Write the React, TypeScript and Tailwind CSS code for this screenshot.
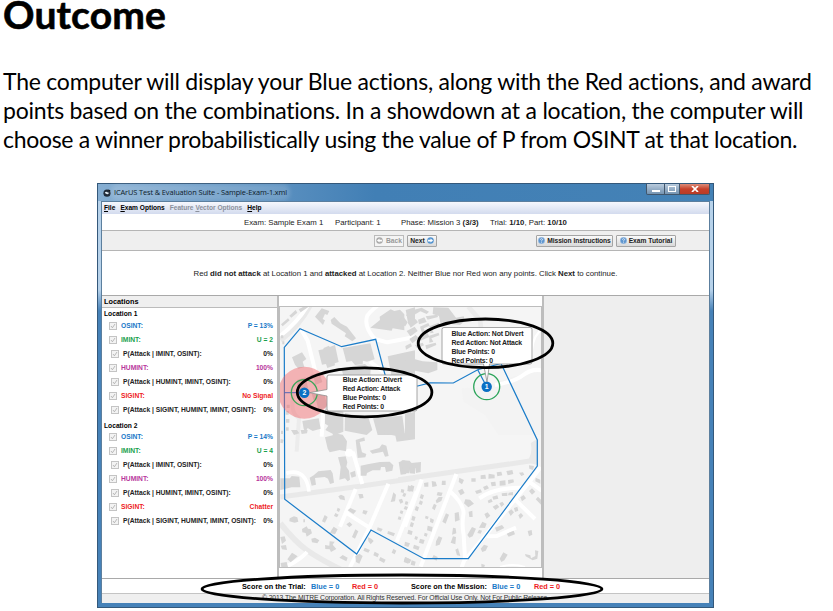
import React from "react";

type Row = { label: string; value: string; color: string; sub?: boolean };

const rowsFor = (p: string, u: string, sig: string): Row[] => [
  { label: "OSINT:", value: p, color: "text-[#1878c8]" },
  { label: "IMINT:", value: u, color: "text-[#18a04c]" },
  { label: "P(Attack | IMINT, OSINT):", value: "0%", color: "text-[#222]", sub: true },
  { label: "HUMINT:", value: "100%", color: "text-[#b8369c]" },
  { label: "P(Attack | HUMINT, IMINT, OSINT):", value: "0%", color: "text-[#222]", sub: true },
  { label: "SIGINT:", value: sig, color: "text-[#ee1c24]" },
  { label: "P(Attack | SIGINT, HUMINT, IMINT, OSINT):", value: "0%", color: "text-[#222]", sub: true },
];

function Check() {
  return (
    <svg className="h-2 w-2 shrink-0" viewBox="0 0 8 8">
      <rect x="0.5" y="0.5" width="7" height="7" fill="#f3f3f3" stroke="#c4c4c4" />
      <path d="M2 4 L3.4 5.8 L6 2" fill="none" stroke="#aaa" strokeWidth="0.8" />
    </svg>
  );
}

function SignalRow({ row }: { row: Row }) {
  return (
    <div className={`flex h-[14px] items-center pr-[4px] ${row.sub ? "pl-[9px]" : "pl-[7px]"} ${row.color}`}>
      <Check />
      <span className="ml-1 flex-1 pt-px">{row.label}</span>
      <span className="pt-px">{row.value}</span>
    </div>
  );
}

function HelpIcon() {
  return (
    <svg className="h-[7px] w-[7px] shrink-0" viewBox="0 0 8 8">
      <circle cx="4" cy="4" r="3.7" fill="#5f96cf" stroke="#a9c6e4" strokeWidth="0.6" />
      <path d="M2.8 3.1 Q2.9 1.9 4 1.9 Q5.3 2 5.2 3.1 Q5 3.8 4 4.3 V5 M4 5.7 V6.5" fill="none" stroke="#fff" strokeWidth="0.8" />
    </svg>
  );
}

function ArrowIcon({ back }: { back?: boolean }) {
  return (
    <svg className="h-[7px] w-[7px] shrink-0" viewBox="0 0 8 8">
      <circle cx="4" cy="4" r="3.7" fill={back ? "#aaa" : "#5494d0"} />
      <path d={back ? "M6.8 3 H4 V1.7 L1 4 L4 6.3 V5 H6.8 Z" : "M1.2 3 H4 V1.7 L7 4 L4 6.3 V5 H1.2 Z"} fill="#fff" />
    </svg>
  );
}

const btn =
  "flex h-[12px] items-center justify-center rounded-[1px] border border-[#a4a4a4] bg-gradient-to-b from-[#fafafa] to-[#d9d9d9] text-[6.7px] font-bold text-[#222]";

const buildings = {
  topLeft: [
    "M120 65 L140 40 L163 48 L157 60 L150 57 L143 72 L150 76 L144 90 Z",
    "M167 75 L178 66 L196 85 L216 95 L243 130 L232 139 L209 124 L213 115 L170 86 Z",
    "M286 98 L315 75 L314 65 L347 43 L358 48 L375 44 L388 58 L388 106 L353 100 L350 107 Z",
    "M392 45 L420 37 V86 L400 88 Z",
    "M130 166 L145 163 L146 159 L162 152 L164 156 L180 150 L191 201 L179 205 L180 211 L157 219 L153 207 L141 209 Z",
    "M203 159 L286 145 L299 193 L276 200 L264 197 L263 208 L240 210 L230 198 L214 201 Z",
    "M338 184 L420 166 V246 H350 Z",
    "M51 187 L81 172 L94 192 L83 200 L88 216 L70 221 L60 209 Z",
    "M200 220 L270 207 L287 221 L286 239 L204 240 Z",
    "M66 255 L92 247 L99 278 L82 286 L80 303 L68 299 Z",
    "M106 240 L133 233 L142 261 L121 270 L117 251 L108 251 Z",
    "M110 295 L145 284 L158 337 L130 345 L123 314 L115 314 Z",
    "M82 378 L131 370 L137 401 L113 408 L98 399 L91 412 L86 401 Z",
    "M150 340 L205 350 L205 410 L180 420 L151 405 L160 392 L150 386 Z",
    "M210 354 L281 370 L292 405 L275 420 L209 407 Z",
    "M294 370 L382 362 L390 420 H308 Z",
    "M394 357 L420 350 V420 H398 Z",
    "M18 88 L39 70 L44 76 L23 94 Z M43 62 L62 45 L67 53 L49 68 Z M71 43 L84 36 H100 L77 52 Z",
    "M35 329 h9 v10 h-9z M32 348 h9 v11 h-9z M33 372 h10 v11 h-10z M33 397 h8 v10 h-8z M18 121 h7 v9 h-7z M22 139 h6 v9 h-6z",
  ],
  topRight: [
    "M0 198 L13 188 L53 199 L97 202 V225 L70 235 L0 222 Z",
    "M-17 75 L-6 64 L8 82 L1 94 L-17 86 Z",
    "M85 37 L130 38 L153 68 L176 64 L180 78 L165 90 L106 83 L102 63 L83 57 Z",
    "M3 60 L22 48 L31 59 L12 72 Z M25 45 L50 38 L72 50 L65 57 L46 49 L31 58 Z M62 64 L97 59 L99 66 L68 74 Z M39 74 L58 67 L65 81 L42 88 Z M11 86 L32 72 L39 82 L17 98 Z M5 108 L29 95 L38 108 L16 124 Z M45 95 L70 84 L74 92 L56 100 L62 113 L52 117 Z M73 94 L101 83 L104 91 L81 101 L86 113 L76 115 Z M13 132 L32 120 L42 130 L22 145 Z M40 125 L68 114 L73 126 L46 137 Z M73 122 L101 113 L103 121 L79 130 L85 140 L73 143 Z M1 153 L17 145 L21 154 L3 164 Z M30 150 L53 143 L57 151 L36 160 Z M61 151 L92 143 L94 150 L64 163 Z",
    "M0 357 L18 347 V420 H0 Z",
  ],
  bottomLeft: [
    "M150 22 L173 16 L174 9 L203 14 L216 34 L213 64 L194 60 L164 67 L158 56 Z",
    "M242 30 L268 22 L270 32 L254 36 L261 67 L274 72 L271 82 L248 84 Z",
    "M284 62 L313 54 L321 43 L334 47 L341 78 L330 80 L324 65 L292 71 Z",
    "M327 0 H378 L384 11 L420 0 V28 L365 35 L361 17 L330 11 Z",
    "M189 82 L212 79 L217 97 L214 110 L222 122 L225 149 L218 154 L210 145 L193 149 L197 111 Z",
    "M225 128 L240 122 L243 139 L230 143 Z",
    "M257 107 L278 103 L315 96 L344 95 L355 106 L352 122 L333 126 L330 111 L318 111 L316 121 L293 121 L276 129 L274 137 L257 137 Z",
    "M371 97 L386 91 L420 102 V131 L404 130 L400 110 L390 111 L394 132 L377 134 Z",
    "M16 145 L45 145 L50 138 L73 140 L76 172 L50 172 L16 180 Z",
    "M104 143 L116 136 L130 124 L167 120 L173 130 L177 158 L165 162 L159 146 L149 141 L120 144 L123 164 L110 167 Z",
    "M48 0 H66 L73 10 L57 15 Z M77 0 H98 L96 10 L80 12 Z",
    "M44 265 L57 259 L67 262 L70 275 L59 278 L43 274 Z M81 297 L95 289 L99 296 L107 297 L111 310 L95 320 L92 309 L82 307 Z M109 326 L120 323 L133 331 L127 340 L111 337 Z M150 345 L163 347 L164 334 L179 335 L173 344 L184 357 L168 366 L164 358 L151 357 Z",
    "M190 199 L198 194 L208 199 L210 211 L195 208 Z M250 192 h13 l3 11 l-12 3z M218 241 l8 -7 l18 8 l-9 10z M181 249 l10 5 l-5 8 l-9 -4z M188 233 l8 4 l-4 9 l-7 -4z M214 283 l10 -7 l8 8 l-9 8z M231 321 L241 298 L250 304 L240 326 Z M169 301 L176 290 L188 298 L180 313 L165 309 Z M141 274 L149 255 L158 261 L150 278 Z M193 383 l10 -8 l15 8 l-4 11z",
    "M350 206 L355 187 L363 194 L360 214 L347 216 Z M371 209 l10 -3 l4 11 l-9 4z M379 177 l9 2 l-2 10 l-9 -2z M386 188 l8 3 l-4 10 l-8 -3z M399 166 l11 4 l-4 15 l-9 -2z M392 213 l8 3 l-3 9 l-8 -2z M390 228 l9 3 l-4 9 l-9 -3z M377 241 l8 3 l-3 9 l-8 -4z M371 259 l8 3 l-2 8 l-9 -2z",
    "M265 240 l13 3 l-5 11 l-11 -4z M308 292 l15 5 l-5 8 l-12 -5z M339 303 l21 7 l-4 9 l-19 -8z M279 322 l10 4 l7 7 l-9 10 l-7 -9z M269 353 l16 7 l-5 8 l-15 -6z M299 365 l13 7 l-4 10 l-13 -6z M316 381 l16 8 l-5 10 l-15 -8z M355 356 l9 6 l-5 11 l-9 -5z M391 381 l18 8 l-5 11 l-17 -6z M241 378 L253 371 L263 378 L253 401 L243 396 Z",
    "M16 321 l13 -2 l4 13 l-12 10z M17 347 l16 -2 l3 15 l-15 -2z M37 388 l14 -20 l17 11 l-21 18z M17 399 l18 -3 l4 15 h-20z M85 268 h5 v9 h-5z",
    "M18 2 h6 v10 h-6z M17 27 l9 2 l-3 11 l-7 -2z",
  ],
  bottomRight: [
    "M0 0 H21 L26 23 L0 28 Z M-10 91 L14 92 L19 99 L48 96 L47 126 L33 129 L31 114 L13 113 L12 130 L-7 129 Z",
    "M18 165 l10 4 l-4 16 l-13 -3z M57 159 l13 -2 v13 h-12z M80 153 l12 2 l4 13 l-14 3z M111 152 h11 v13 h-12z M163 143 l14 7 l-6 13 l-10 -7z M159 182 l13 -6 l7 13 l-12 7z M199 145 h13 v10 h-13z M227 136 l14 -2 l2 12 l-16 1z M251 131 l18 3 v11 l-19 1z M275 127 l14 -2 l3 11 l-15 3z M304 123 l18 -3 l3 12 l-17 4z M342 128 l12 -1 l4 7 l-9 4z M372 106 l15 2 l-3 12 l-11 -4z M210 183 l17 -5 l4 9 l-16 5z M234 171 l12 -5 l6 9 l-13 6z M257 157 l14 -2 l2 12 l-13 2z M284 153 l17 -2 l1 15 l-18 1z M309 150 l16 -2 l2 9 l-17 5z",
    "M177 220 L181 208 L195 209 L207 221 L190 232 Z M191 245 l11 -3 l1 19 h-10z M222 293 L232 275 L245 281 L240 294 Z M238 252 L248 247 L256 257 L245 266 Z M187 315 L201 291 L213 296 L203 319 L193 323 Z M222 299 l9 3 l-4 9 l-10 -2z M248 212 l11 -6 l4 9 l-12 5z M262 200 l15 -4 l3 10 l-15 3z M290 190 l17 -2 v10 h-16z M311 188 l13 -2 v10 h-15z M263 230 l13 -7 l7 8 l-12 9z M283 220 l9 -5 l6 8 l-9 8z M310 245 l9 -7 l8 9 l-10 11z M327 234 l10 -4 l3 12 l-10 4z M340 256 l8 -7 l7 8 l-10 10z M346 202 l10 -7 l7 10 l-12 9z M372 183 l9 -8 l10 10 l-10 9z M392 143 l14 6 v12 l-15 -7z M392 208 l7 -8 l10 10 v15z",
    "M81 235 L87 221 L95 226 L89 241 Z M48 192 l9 4 l-4 12 l-9 -4z M45 211 l9 4 l-4 10 l-9 -3z M33 228 l9 4 l-4 12 l-9 -4z M22 257 l10 4 l-4 12 l-9 -3z M18 276 l9 4 l-4 12 l-9 -3z M10 299 l13 5 l-3 11 l-13 -4z M31 318 l8 3 l-3 9 l-8 -3z M45 326 l14 4 l-4 12 l-13 -4z M59 308 l9 3 l-3 9 l-8 -3z M68 287 l15 4 l-3 14 l-14 -4z M76 264 l11 5 l-3 11 l-9 -4z M62 257 l9 3 l-3 8 l-8 -3z M92 212 l9 -11 h12 l-4 12 l-14 7z M98 186 l15 2 l-4 11 l-14 -3z M112 275 L123 250 L132 254 L122 281 Z M149 249 l12 -3 l3 24 l-14 5z M144 293 l8 2 l2 15 l-13 4z M93 334 l8 -15 l11 4 l-8 21 l-12 4z M137 338 l7 -19 l9 2 l-2 22z M151 359 l8 -4 l7 23 l-10 -2z",
    "M227 356 l10 -12 l12 4 l-7 14 l-10 4z M270 293 L291 285 L298 294 L275 305 Z M305 311 L326 302 L330 313 L311 320 Z M284 386 L295 367 L308 374 L298 391 L289 396 Z M360 372 L376 376 L378 385 L391 378 L390 361 L400 363 L397 386 L383 391 L362 379 Z M368 303 l12 -3 l2 14 l-10 5z M0 381 l15 7 l-5 13 l-14 -5z M86 375 l12 6 l-3 11 l-14 -7z M20 391 l12 4 l-3 12 l-12 -3z M229 401 l11 4 l-3 8 l-8 -3z M0 335 l15 5 l-5 11 l-12 -4z M27 344 l17 6 l-4 11 l-16 -6z",
  ],
};

const tiles = ["translate(275 295) scale(0.33333)", "translate(405 295) scale(0.33333)", "translate(275 430) scale(0.33333)", "translate(405 430) scale(0.33333)"];

function CityMap() {
  return (
    <svg className="block h-[260px] w-[261px]" viewBox="280 307 261 260">
      <rect x="280" y="307" width="261" height="260" fill="#f5f5f5" />
      <g transform={tiles[0]} fill="none" stroke="#fff" strokeWidth="12" strokeLinejoin="round">
        <path d="M16 135 Q70 95 104 32" stroke="#e9e9e9" strokeWidth="18" />
        <path d="M16 122 Q65 85 98 32" />
        <path d="M78 103 L98 137 L123 238" />
        <path d="M307 33 Q285 50 277 62 Q265 95 300 132 L337 142 L420 126" />
        <path d="M57 295 Q42 350 72 370 L65 470" stroke="#ececec" />
        <path d="M145 335 L140 425" />
        <path d="M285 200 L325 230" />
      </g>
      <g transform={tiles[1]} fill="none">
        <path d="M190 35 L225 75 L240 190" stroke="#ececec" strokeWidth="14" />
        <path d="M170 280 L250 275 Q310 240 410 230 V420 H280 L240 360 L175 320 Z" fill="#f3f3f3" />
        <path d="M270 270 Q330 260 355 240 T410 226" stroke="#fff" strokeWidth="12" />
        <path d="M404 108 Q378 135 380 190" stroke="#fff" strokeWidth="7" />
      </g>
      <g transform={tiles[2]} fill="none" stroke="#fff" strokeWidth="12">
        <path d="M16 201 L260 168 L420 145" stroke="#e9e9e9" strokeWidth="15" />
        <path d="M16 280 Q60 335 95 360 T200 420" stroke="#e9e9e9" strokeWidth="17" />
        <path d="M34 130 Q65 120 82 136 T102 185" strokeWidth="11" />
        <path d="M213 67 L235 70 L262 162" />
        <circle cx="222" cy="68" r="12" fill="#fff" stroke="none" />
        <path d="M242 177 L195 290 M212 247 L282 292 M340 161 L283 294 L225 412 M425 184 L365 335" />
        <path d="M35 409 Q75 390 96 366" />
      </g>
      <g transform={tiles[3]} fill="none" stroke="#fff" strokeWidth="12">
        <path d="M-20 149 L390 91" stroke="#e9e9e9" strokeWidth="15" />
        <path d="M366 97 Q387 75 380 40 L397 30 V105" fill="#e9e9e9" stroke="#e9e9e9" strokeWidth="5" />
        <path d="M50 149 L0 290" />
        <path d="M154 132 L47 410 M135 184 Q180 225 175 255 T176 315 L180 385 L170 412" />
        <path d="M223 205 Q270 170 360 174 M407 111 L370 160 L180 390 M372 155 L410 182 M333 211 L390 267 M245 319 L275 318 L333 293" />
        <path d="M285 411 Q325 399 360 411" strokeWidth="6" />
      </g>
      {Object.values(buildings).map((group, i) => (
        <g key={i} transform={tiles[i]} fill="#d6d6d6">
          {group.map((d, j) => <path key={j} d={d} />)}
        </g>
      ))}
      <g fill="none" stroke="#1a7cc9" strokeWidth="1.2">
        <path d="M284.3 347.3 L300 328.7 L341.7 346.7 L375.7 339.3 L388 386 L417.7 386 L430 382.8 L453.3 383 L477.7 369.7 L501 363.5 L537.3 440 V466 L468.3 558.7 H424 L371 530 L356.7 554 L284.7 499.3 Z" />
        <path d="M477.7 369.7 L486.7 386.7" />
      </g>
      <circle cx="304.3" cy="392.7" r="26" fill="#f05a60" fillOpacity="0.43" />
      <path d="M284.5 392.7 H304" stroke="#5364b5" strokeWidth="1" />
      <circle cx="304.3" cy="392.7" r="13" fill="none" stroke="#3ba457" strokeWidth="1.3" />
      <circle cx="486.7" cy="386.7" r="13" fill="none" stroke="#2ba45a" strokeWidth="1.3" />
      <circle cx="304.3" cy="392.7" r="5.2" fill="#0b70c4" />
      <circle cx="486.7" cy="386.7" r="5.2" fill="#0b70c4" />
      <g fill="#fff" stroke="#8f8f8f" strokeWidth="0.8">
        <path d="M329 375 H415 Q417 375 417 377 V409 Q417 411 415 411 H329 Q327 411 327 409 V396 L309.5 392.7 L327 389.5 V377 Q327 375 329 375 Z" />
        <path d="M444 327.5 H530 Q532 327.5 532 329.5 V362 Q532 364 530 364 H489.5 L487 382 L483.5 364 H444 Q442 364 442 362 V329.5 Q442 327.5 444 327.5 Z" />
      </g>
      <g fontFamily="Liberation Sans, Arial, sans-serif" fontSize="6.9" fontWeight="bold" fill="#222">
        <text x="342.7" y="382.4" textLength="59.3">Blue Action: Divert</text>
        <text x="342.7" y="391.4" textLength="57.7">Red Action: Attack</text>
        <text x="342.7" y="400.4" textLength="43.3">Blue Points: 0</text>
        <text x="342.7" y="409.4" textLength="41.3">Red Points: 0</text>
        <text x="451.5" y="335.8" textLength="72">Blue Action: Not Divert</text>
        <text x="451.5" y="344.8" textLength="70.7">Red Action: Not Attack</text>
        <text x="451.5" y="353.8" textLength="43.5">Blue Points: 0</text>
        <text x="451.5" y="362.6" textLength="41.5">Red Points: 0</text>
        <text x="304.3" y="395.2" textAnchor="middle" fill="#fff">2</text>
        <text x="486.7" y="389.2" textAnchor="middle" fill="#fff">1</text>
      </g>
    </svg>
  );
}

function TitleBar() {
  return (
    <div className="flex h-[17px] shrink-0 items-start justify-between bg-gradient-to-r from-[#86aed2] via-[#417fb5] via-45% to-[#4482b6] pl-[5px]">
      <div className="flex h-[17px] items-center gap-[3px]">
        <svg className="h-2 w-2 shrink-0" viewBox="0 0 9 9">
          <circle cx="4.5" cy="4.7" r="4" fill="#1f2a38" />
          <path d="M2 4.5 Q3 2.5 4.5 3.5 T7 4 Q6 6.5 4.5 5.8 Z" fill="#e4edf5" />
          <path d="M6 .5 L8.5 1.5 L7 3Z" fill="#111" />
        </svg>
        <span className="whitespace-nowrap rounded bg-white/15 font-['Open_Sans',sans-serif] text-[7.4px] leading-[11px] tracking-[-0.11px] text-[#0d1b29] shadow-[0_0_4px_3px_rgba(255,255,255,0.15)]">
          ICArUS Test &amp; Evaluation Suite - Sample-Exam-1.xml
        </span>
      </div>
      <div className="mr-[3px] flex h-[11px] overflow-hidden rounded-b-[2px] border border-t-0 border-[#42566b]">
        <div className="flex w-[18px] items-end justify-center border-r border-[#42566b] bg-gradient-to-b from-[#b9cbdd] to-[#7594b2] pb-[2px]">
          <span className="h-[2px] w-[8px] bg-white" />
        </div>
        <div className="flex w-[15px] items-center justify-center border-r border-[#42566b] bg-gradient-to-b from-[#b9cbdd] to-[#7594b2]">
          <span className="h-[6px] w-[8px] border-[1.5px] border-white" />
        </div>
        <div className="flex w-[29px] items-center justify-center bg-gradient-to-b from-[#dc8b78] via-[#c7402a] to-[#b83c28]">
          <svg className="h-[6px] w-[8px]" viewBox="0 0 8 6"><path d="M1 0 L7 6 M7 0 L1 6" stroke="#fff" strokeWidth="1.7" /></svg>
        </div>
      </div>
    </div>
  );
}

export default function App() {
  return (
    <div className="relative h-[611px] w-[833px] overflow-hidden bg-white font-['Liberation_Sans',Arial,sans-serif] text-black">
      <h1 className="h-[66px] pl-[3px] font-['Lato',sans-serif] text-[39px] font-bold leading-[29px] tracking-[0.15px] [-webkit-text-stroke:0.6px_black]">Outcome</h1>
      <div className="h-[117px] whitespace-nowrap pl-[3px] pt-px font-['Lato',sans-serif] text-[23px] leading-[29px]">
        <p className="tracking-[-0.24px]">The computer will display your Blue actions, along with the Red actions, and award</p>
        <p className="tracking-[-0.23px]">points based on the combinations. In a showdown at a location, the computer will</p>
        <p className="tracking-[-0.3px]">choose a winner probabilistically using the value of P from OSINT at that location.</p>
      </div>

      <div className="ml-[97px] flex h-[425px] w-[617px] flex-col border border-[#34587a] bg-gradient-to-b from-[#b7d2ea] from-25% to-[#4682b8] to-30%">
        <TitleBar />
        <div className="mx-[3px] flex h-[402px] w-[609px] shrink-0 flex-col border border-[#5c7f9e] bg-white">
          <div className="flex h-[12px] shrink-0 items-center gap-[5px] whitespace-nowrap bg-gradient-to-b from-[#f6f8fd] to-[#d3dbee] pl-[2px] text-[6.6px] font-bold">
            <span><u>F</u>ile</span>
            <span><u>E</u>xam Options</span>
            <span className="text-[#8c919c]">Feature <u>V</u>ector Options</span>
            <span><u>H</u>elp</span>
          </div>
          <div className="flex h-[17px] shrink-0 items-center whitespace-nowrap border-b border-[#b5b5b5] pl-[142px] pt-[2px] text-[7.8px] text-[#222]">
            <span className="w-[91px]">Exam: Sample Exam 1</span>
            <span className="w-[66px]">Participant: 1</span>
            <span className="w-[89px]">Phase: Mission 3 <b>(3/3)</b></span>
            <span>Trial: <b>1/10</b>, Part: <b>10/10</b></span>
          </div>
          <div className="flex h-5 shrink-0 items-center whitespace-nowrap border-b border-[#b5b5b5] bg-[#efefef] pl-[272px]">
            <div className="mr-[3px] flex h-[12px] w-[30px] items-center justify-center gap-[3px] border border-[#bbb] bg-[#f4f4f4] text-[6.7px] font-bold text-[#999]"><ArrowIcon back /><span className="pt-px">Back</span></div>
            <div className={`${btn} w-[30px] gap-[2px]`}><span className="pt-px">Next</span><ArrowIcon /></div>
            <div className={`${btn} ml-[99px] w-[77px] gap-[2px] tracking-[-0.08px]`}><HelpIcon /><span className="pt-px">Mission Instructions</span></div>
            <div className={`${btn} ml-[3px] w-[60px] gap-[2px]`}><HelpIcon /><span className="pt-px">Exam Tutorial</span></div>
          </div>
          <p className="flex h-11 shrink-0 items-center justify-center whitespace-pre pt-[2px] text-[7.8px] text-[#222]">
            Red <b>did not attack</b> at Location 1 and <b>attacked</b> at Location 2. Neither Blue nor Red won any points. Click <b>Next</b> to continue.
          </p>
          <div className="flex h-[284px] shrink-0 border-y border-[#a9a9a9]">
            <div className="w-[175px] whitespace-nowrap text-[6.7px] font-bold">
              <div className="flex h-[12px] items-center border-b border-[#bbb] bg-[#efefef] pl-[2px] pt-[2px] text-[7.3px]">Locations</div>
              <div className="flex h-[11px] items-center pl-[2px] pt-[2px]">Location 1</div>
              {rowsFor("P = 13%", "U = 2", "No Signal").map((r) => <SignalRow key={r.label} row={r} />)}
              <div className="flex h-[13px] items-end pl-[2px] leading-[9px]">Location 2</div>
              {rowsFor("P = 14%", "U = 4", "Chatter").map((r) => <SignalRow key={r.label} row={r} />)}
            </div>
            <div className="w-[2px] bg-[#bdbdbd]" />
            <div className="w-[263px] bg-white pt-[10px]">
              <div className="h-[262px] border border-[#bdbdbd]"><CityMap /></div>
            </div>
            <div className="w-[2px] bg-[#bdbdbd]" />
            <div className="flex-1 bg-[#eee]" />
          </div>
          <div className="flex h-[14px] shrink-0 items-center whitespace-nowrap pl-[140px] pt-[2px] text-[7.3px] font-bold">
            <span className="w-[69px]">Score on the Trial:</span>
            <span className="w-[41px] text-[#1878c8]">Blue = 0</span>
            <span className="w-[59px] text-[#ee1c24]">Red = 0</span>
            <span className="w-[81px]">Score on the Mission:</span>
            <span className="w-[42px] text-[#1878c8]">Blue = 0</span>
            <span className="text-[#ee1c24]">Red = 0</span>
          </div>
          <div className="flex h-[10px] shrink-0 items-center justify-center whitespace-nowrap border-t border-[#c4c4c4] bg-[#efefef] text-[6.8px] tracking-[-0.14px] text-[#333]">
            © 2013 The MITRE Corporation. All Rights Reserved. For Official Use Only. Not For Public Release.
          </div>
        </div>
      </div>

      <svg className="absolute left-0 top-0 h-[611px] w-[833px]" viewBox="0 0 833 611" fill="none" stroke="#000" strokeWidth="2.8">
        <ellipse cx="485.5" cy="343.3" rx="67.3" ry="24.3" />
        <ellipse cx="364.6" cy="392.3" rx="67.3" ry="24.5" />
        <ellipse cx="402" cy="589" rx="200" ry="14" />
      </svg>
    </div>
  );
}
